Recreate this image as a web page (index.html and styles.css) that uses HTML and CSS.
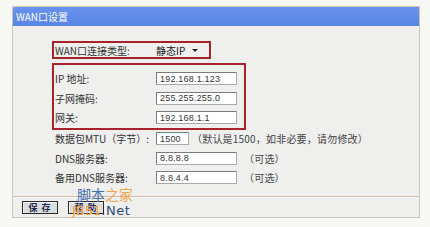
FILE: index.html
```html
<!DOCTYPE html>
<html lang="zh-CN">
<head>
<meta charset="utf-8">
<title>WAN口设置</title>
<link rel="stylesheet" href="styles.css">
</head>
<body>
<div class="page">
  <div class="panel">
    <div class="header">WAN口设置</div>
    <div class="body">
      <div class="box box-type">
        <div class="row">
          <span class="label">WAN口连接类型:</span>
          <span class="select">静态IP<i class="caret"></i></span>
        </div>
      </div>
      <div class="box box-ip">
        <div class="row"><span class="label">IP 地址:</span><input class="field" type="text" value="192.168.1.123"></div>
        <div class="row"><span class="label">子网掩码:</span><input class="field" type="text" value="255.255.255.0"></div>
        <div class="row"><span class="label">网关:</span><input class="field" type="text" value="192.168.1.1"></div>
      </div>
      <div class="rows">
        <div class="row"><span class="label">数据包MTU（字节）:</span><input class="field short" type="text" value="1500"><span class="hint">（默认是1500，如非必要，请勿修改）</span></div>
        <div class="row"><span class="label">DNS服务器:</span><input class="field" type="text" value="8.8.8.8"><span class="hint opt">（可选）</span></div>
        <div class="row"><span class="label">备用DNS服务器:</span><input class="field" type="text" value="8.8.4.4"><span class="hint opt">（可选）</span></div>
      </div>
    </div>
    <div class="footer">
      <button class="btn" type="button">保 存</button>
      <button class="btn" type="button">帮 助</button>
    </div>
  </div>
  <div class="watermark">
    <div class="wm-top"><span class="wm-blue">脚本</span><span class="wm-orange">之家</span></div>
    <div class="wm-bottom"><span class="wm-jb">JB51</span><span class="wm-net">.Net</span></div>
  </div>
</div>
</body>
</html>
```

FILE: styles.css
```css
html, body {
  margin: 0;
  padding: 0;
}
body {
  background: #f7f7f4;
  font-family: "Noto Sans CJK SC", "Noto Sans", sans-serif;
  color: #333;
  width: 430px;
  height: 227px;
  overflow: hidden;
}
.page {
  position: relative;
  padding: 6px 0 0 12px;
}
.panel {
  width: 408px;
  height: 212px;
  box-sizing: border-box;
  border: 1px solid #c9c6bd;
  background: #efefee;
  display: flex;
  flex-direction: column;
}
.header {
  height: 19px;
  background: linear-gradient(#6993ec, #5884e6);
  color: #fff;
  font-size: 10px;
  line-height: 19px;
  padding-left: 3px;
  border-radius: 2px 0 0 0;
}
.body {
  padding: 15px 0 0 39px;
  flex: 1;
}
.box {
  border: 2px solid #a8222e;
  box-sizing: border-box;
}
.box-type {
  width: 159px;
  height: 18px;
  display: flex;
  align-items: center;
  padding-left: 1px;
}
.box-ip {
  width: 194px;
  height: 67px;
  margin-top: 4px;
  padding: 4px 0 0 1px;
}
.row {
  display: flex;
  align-items: center;
  height: 19.5px;
  font-size: 10px;
  white-space: nowrap;
}
.box-type .row {
  height: 14px;
}
.label {
  width: 101px;
  flex: none;
  color: #333;
}
.select {
  display: flex;
  align-items: center;
  color: #222;
  font-size: 10px;
}
.caret {
  display: inline-block;
  margin-left: 7px;
  width: 0;
  height: 0;
  border-left: 3px solid transparent;
  border-right: 3px solid transparent;
  border-top: 3px solid #222;
}
.field {
  box-sizing: border-box;
  width: 81px;
  height: 13px;
  margin: 0;
  padding: 0 0 0 3px;
  border: 1px solid #7a7a7a;
  border-right-color: #a9a9a9;
  border-bottom-color: #a9a9a9;
  background: #fff;
  font-family: "Liberation Sans", sans-serif;
  font-size: 9px;
  color: #333;
  letter-spacing: 0.2px;
  outline: none;
}
.field.short {
  width: 33px;
}
.rows {
  margin-top: -1px;
  padding-left: 3px;
}
.hint {
  margin-left: 3px;
  color: #444;
  font-size: 10px;
  letter-spacing: 0.2px;
}
.hint.opt {
  margin-left: 7px;
}
.footer {
  height: 21px;
  border-top: 1px solid #d7b7a7;
  box-shadow: inset 0 1px 0 #fbf6f2;
  display: flex;
  align-items: flex-start;
  gap: 10px;
  padding: 4px 0 0 9px;
  box-sizing: border-box;
}
.btn {
  width: 36px;
  height: 13px;
  margin: 0;
  padding: 0;
  border: 1px solid #2a2a2a;
  background: #dcdcdc;
  box-shadow: inset 1px 1px 0 #f4f4f4;
  font-family: "Noto Sans CJK SC", sans-serif;
  font-size: 9px;
  font-weight: bold;
  line-height: 11px;
  color: #1f2d55;
  letter-spacing: 1px;
}
.watermark {
  position: absolute;
  z-index: 2;
  left: 72px;
  top: 185px;
  line-height: 1;
}
.wm-top {
  padding-left: 5px;
}
.wm-blue {
  color: #3f6fae;
  font-size: 14px;
}
.wm-orange {
  color: #f2a44c;
  font-size: 14px;
}
.wm-bottom {
  margin-top: 1px;
  font-family: "DejaVu Sans", sans-serif;
}
.wm-jb {
  color: #f39a2e;
  font-size: 13px;
  text-shadow: 0 0 1px #fff;
}
.wm-net {
  color: #2e4a78;
  font-size: 13px;
  letter-spacing: 0.5px;
}
```
